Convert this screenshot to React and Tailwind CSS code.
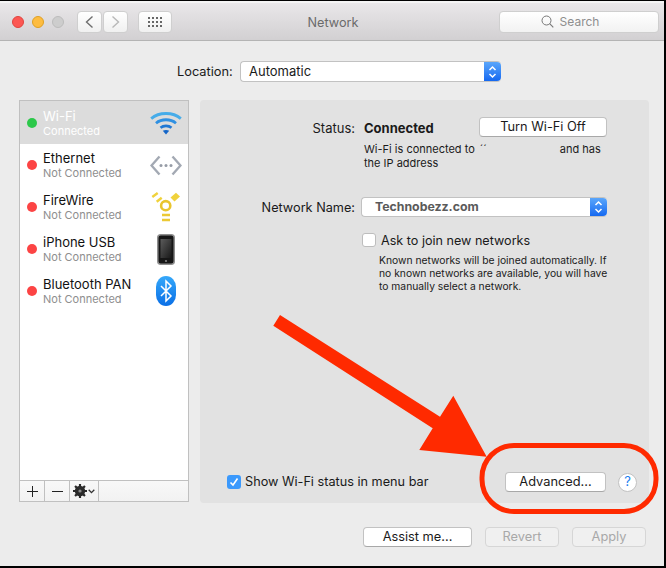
import React from 'react';

function WifiIcon() {
  return (
    <svg width="32" height="24" viewBox="0 0 32 24" fill="none">
      <path d="M1.2 7.6C9 0.8 23 0.8 30.8 7.6" stroke="#46ace9" strokeWidth="2.8" />
      <path d="M6 12.2C11.5 7.6 20.5 7.6 26 12.2" stroke="#2f90e2" strokeWidth="2.8" />
      <path d="M10.5 16.8C13.5 14.2 18.5 14.2 21.5 16.8" stroke="#1f78d4" strokeWidth="2.6" />
      <path d="M16 23.5L12.8 19.8C14.6 18.6 17.4 18.6 19.2 19.8Z" fill="#1466c8" />
    </svg>
  );
}

function EthernetIcon() {
  return (
    <svg width="32" height="21" viewBox="0 0 32 21" fill="none">
      <path d="M9.5 1.5L1.5 10.5L9.5 19.5" stroke="#a3a9b3" strokeWidth="2.4" />
      <path d="M22.5 1.5L30.5 10.5L22.5 19.5" stroke="#a3a9b3" strokeWidth="2.4" />
      <circle cx="11" cy="10.5" r="1.5" fill="#969ca6" />
      <circle cx="16" cy="10.5" r="1.5" fill="#969ca6" />
      <circle cx="21" cy="10.5" r="1.5" fill="#969ca6" />
    </svg>
  );
}

function FireWireIcon() {
  return (
    <svg width="30" height="30" viewBox="0 0 30 30" fill="none">
      <path d="M1.3 5L6.7 1M5.7 9.7L10.7 5.7" stroke="#f0d23c" strokeWidth="2.4" />
      <path d="M19.5 5.5L25 0.8L29 4.5L23.5 9.5Z" fill="#f0d23c" />
      <circle cx="14.7" cy="13.7" r="4.6" stroke="#e9c52e" strokeWidth="2.6" />
      <path d="M11 23H19M11 28H19" stroke="#ecc935" strokeWidth="2.4" />
    </svg>
  );
}

function PhoneIcon() {
  return (
    <svg width="18" height="31" viewBox="0 0 18 31">
      <defs>
        <linearGradient id="phoneScreen" x1="0" y1="0" x2="1" y2="1">
          <stop offset="0" stopColor="#5c5c5c" />
          <stop offset="1" stopColor="#181818" />
        </linearGradient>
      </defs>
      <rect x="0.75" y="0.75" width="16.5" height="29.5" rx="3" fill="#161616" stroke="#8f8f8f" strokeWidth="1.5" />
      <rect x="3.5" y="5" width="11" height="19" fill="url(#phoneScreen)" />
      <circle cx="9" cy="27" r="1.1" fill="#808080" />
    </svg>
  );
}

function BluetoothIcon() {
  return (
    <svg width="20" height="30" viewBox="0 0 20 30" fill="none">
      <defs>
        <linearGradient id="btBlue" x1="0" y1="0" x2="0" y2="1">
          <stop offset="0" stopColor="#35a8fa" />
          <stop offset="1" stopColor="#0a6fe6" />
        </linearGradient>
      </defs>
      <rect width="20" height="30" rx="10" ry="11" fill="url(#btBlue)" />
      <path d="M5 10L15 20L10 25V5L15 10L5 20" stroke="#fff" strokeWidth="1.5" />
    </svg>
  );
}

function Stepper() {
  return (
    <div className="w-[17px] shrink-0 flex items-center justify-center bg-gradient-to-b from-[#5aa6fb] to-[#1468f0] rounded-r-[4px]">
      <svg width="9" height="14" viewBox="0 0 9 14" fill="none">
        <path d="M1.5 5L4.5 2L7.5 5M1.5 9L4.5 12L7.5 9" stroke="#fff" strokeWidth="1.5" />
      </svg>
    </div>
  );
}

function Button({ width, disabled, children }) {
  return (
    <div
      className={`${width} h-[20px] flex items-center justify-center rounded-[4px] text-[12.8px] ${
        disabled
          ? 'bg-[#f0f0f0] text-[#a8a8a8] border border-[#d6d6d6]'
          : 'bg-white text-[#1a1a1a] border border-[#c2c2c2] border-b-[#a8a8a8]'
      }`}
    >
      {children}
    </div>
  );
}

function NetRow({ name, sub, selected, icon }) {
  return (
    <div className={`flex items-center pl-[7px] pr-[4px] ${selected ? 'h-[43px] bg-[#dcdcdc]' : 'h-[42px]'}`}>
      <div className={`w-[10px] h-[10px] rounded-full ${selected ? 'bg-[#2cc84a]' : 'bg-[#fc4444]'}`} />
      <div className="ml-[6px] pt-[2px] flex-1 flex flex-col">
        <span className={`text-[13px] leading-[15px] ${selected ? 'text-white' : 'text-[#111]'}`}>{name}</span>
        <span className={`text-[11px] leading-[15px] ${selected ? 'text-white' : 'text-[#8e8e8e]'}`}>{sub}</span>
      </div>
      <div className="w-[36px] flex items-center justify-center">{icon}</div>
    </div>
  );
}

export default function App() {
  return (
    <div className="relative w-[666px] h-[568px] flex flex-col overflow-hidden bg-[#ececec] border-t border-r-2 border-b-2 border-black font-['Inter',sans-serif] text-[#1a1a1a]">
      {/* title bar */}
      <div className="h-[40px] shrink-0 flex items-center pl-[12px] pr-[5px] border-t-2 border-t-[#f4f4f4] border-b border-b-[#b4b4b4] bg-gradient-to-b from-[#e9e7e9] to-[#d2d0d2]">
        <div className="flex gap-[8px]">
          <div className="w-[12px] h-[12px] rounded-full bg-[#fc5753] border border-[#e0443e]" />
          <div className="w-[12px] h-[12px] rounded-full bg-[#fdbc40] border border-[#dfa023]" />
          <div className="w-[12px] h-[12px] rounded-full bg-[#cdcdcd] border border-[#bcbcbc]" />
        </div>
        <div className="ml-[13px] flex gap-[1px]">
          <div className="w-[25px] h-[22px] flex items-center justify-center rounded-[4px] bg-gradient-to-b from-white to-[#f0f0f0] border border-[#cfcfcf]">
            <svg width="9" height="14" viewBox="0 0 9 14" fill="none">
              <path d="M7.5 1.5L1.5 7L7.5 12.5" stroke="#6e6e6e" strokeWidth="1.4" />
            </svg>
          </div>
          <div className="w-[25px] h-[22px] flex items-center justify-center rounded-[4px] bg-gradient-to-b from-white to-[#f0f0f0] border border-[#cfcfcf]">
            <svg width="9" height="14" viewBox="0 0 9 14" fill="none">
              <path d="M1.5 1.5L7.5 7L1.5 12.5" stroke="#b8b8b8" strokeWidth="1.4" />
            </svg>
          </div>
        </div>
        <div className="ml-[10px] w-[34px] h-[22px] flex items-center justify-center rounded-[4px] bg-gradient-to-b from-white to-[#f0f0f0] border border-[#cfcfcf]">
          <svg width="14" height="10" viewBox="0 0 14 10" fill="#666666">
            <rect x="0" y="0" width="2" height="2" /><rect x="4" y="0" width="2" height="2" /><rect x="8" y="0" width="2" height="2" /><rect x="12" y="0" width="2" height="2" />
            <rect x="0" y="4" width="2" height="2" /><rect x="4" y="4" width="2" height="2" /><rect x="8" y="4" width="2" height="2" /><rect x="12" y="4" width="2" height="2" />
            <rect x="0" y="8" width="2" height="2" /><rect x="4" y="8" width="2" height="2" /><rect x="8" y="8" width="2" height="2" /><rect x="12" y="8" width="2" height="2" />
          </svg>
        </div>
        <div className="flex-1 pr-[5px] pt-[3px] text-center text-[12.7px] text-[#6b6b6b]">Network</div>
        <div className="w-[160px] h-[22px] flex items-center justify-center gap-[6px] pr-[18px] rounded-[4px] bg-gradient-to-b from-white to-[#f2f2f2] border border-[#cfcfcf] text-[12px] text-[#8e8e8e]">
          <svg width="13" height="13" viewBox="0 0 13 13" fill="none">
            <circle cx="5.5" cy="5.5" r="4.5" stroke="#777777" />
            <path d="M8.7 8.7L12.3 12.3" stroke="#777777" strokeWidth="1.1" />
          </svg>
          <span>Search</span>
        </div>
      </div>

      {/* location */}
      <div className="mt-[20px] pl-[177px] flex items-center h-[21px] shrink-0">
        <span className="w-[63px] text-[12.8px]">Location:</span>
        <div className="w-[261px] h-[21px] flex rounded-[4px] bg-white border-t border-b border-l border-[#c2c2c2]">
          <span className="flex-1 pl-[8px] text-[13px] leading-[19px]">Automatic</span>
          <Stepper />
        </div>
      </div>

      {/* main */}
      <div className="mt-[18px] pl-[19px] flex items-start gap-[11px]">
        <div className="w-[170px] h-[402px] flex flex-col bg-white border border-[#c0c0c0]">
          <div className="flex-1">
            <NetRow name="Wi-Fi" sub="Connected" selected icon={<WifiIcon />} />
            <NetRow name="Ethernet" sub="Not Connected" icon={<EthernetIcon />} />
            <NetRow name="FireWire" sub="Not Connected" icon={<FireWireIcon />} />
            <NetRow name="iPhone USB" sub="Not Connected" icon={<PhoneIcon />} />
            <NetRow name="Bluetooth PAN" sub="Not Connected" icon={<BluetoothIcon />} />
          </div>
          <div className="h-[21px] flex border-t border-[#c0c0c0] bg-gradient-to-b from-[#f8f8f8] to-[#f2f2f2]">
            <div className="w-[25px] flex items-center justify-center border-r border-[#c0c0c0]">
              <svg width="11" height="11" viewBox="0 0 11 11" stroke="#222222"><path d="M5.5 0V11M0 5.5H11" /></svg>
            </div>
            <div className="w-[25px] flex items-center justify-center border-r border-[#c0c0c0]">
              <svg width="11" height="11" viewBox="0 0 11 11" stroke="#222222"><path d="M0 5.5H11" /></svg>
            </div>
            <div className="w-[29px] flex items-center justify-center gap-[1px] border-r border-[#c0c0c0]">
              <svg width="14" height="14" viewBox="0 0 13 13">
                <circle cx="6.5" cy="6.5" r="4.8" fill="#2a2a2a" />
                <path d="M6.5 0V2.5M6.5 10.5V13M0 6.5H2.5M10.5 6.5H13M1.9 1.9L3.6 3.6M9.4 9.4L11.1 11.1M11.1 1.9L9.4 3.6M3.6 9.4L1.9 11.1" stroke="#2a2a2a" strokeWidth="2" />
                <circle cx="6.5" cy="6.5" r="1.5" fill="#8a8a8a" />
              </svg>
              <svg width="7" height="5" viewBox="0 0 7 5" fill="none"><path d="M0.7 0.8L3.5 3.6L6.3 0.8" stroke="#333333" strokeWidth="1.3" /></svg>
            </div>
          </div>
        </div>

        <div className="w-[449px] h-[403px] flex flex-col pt-[17px] rounded-[4px] bg-[#e2e2e2]">
          <div className="flex items-center h-[20px]">
            <span className="w-[155px] text-right text-[13px] pt-[4px]">Status:</span>
            <span className="ml-[9px] w-[115px] font-bold text-[13px] pt-[4px]">Connected</span>
            <Button width="w-[128px]">Turn Wi-Fi Off</Button>
          </div>
          <div className="mt-[5px] pl-[164px] text-[11px] leading-[14px]">
            <div className="flex">
              <span>Wi-Fi is connected to</span>
              <span className="ml-[5px] w-[80px]">´´</span>
              <span>and has</span>
            </div>
            <div>the IP address</div>
          </div>
          <div className="mt-[27px] flex items-center h-[20px]">
            <span className="w-[155px] text-right text-[12.7px] pt-[1px]">Network Name:</span>
            <div className="ml-[6px] w-[246px] h-[20px] flex rounded-[4px] bg-white border-t border-b border-l border-[#c2c2c2]">
              <span className="flex-1 pl-[13px] text-[12.3px] leading-[18px] font-bold text-[#5a5a5a]">Technobezz.com</span>
              <Stepper />
            </div>
          </div>
          <div className="mt-[16px] pl-[162px] flex items-center h-[14px]">
            <div className="w-[14px] h-[14px] rounded-[3px] bg-white border border-[#bdbdbd]" />
            <span className="ml-[5px] pt-[2px] text-[12.6px]">Ask to join new networks</span>
          </div>
          <div className="mt-[7px] pl-[179px] text-[10.3px] leading-[13px]">
            <div>Known networks will be joined automatically. If</div>
            <div>no known networks are available, you will have</div>
            <div>to manually select a network.</div>
          </div>
          <div className="mt-auto mb-[11px] pl-[27px] pr-[12px] flex items-center h-[20px]">
            <div className="w-[14px] h-[14px] flex items-center justify-center rounded-[3px] bg-[#3b99fc]">
              <svg width="10" height="10" viewBox="0 0 10 10" fill="none"><path d="M1.5 5.5L4 8L8.5 1.5" stroke="#fff" strokeWidth="1.6" /></svg>
            </div>
            <span className="ml-[4px] flex-1 text-[12.7px]">Show Wi-Fi status in menu bar</span>
            <Button width="w-[101px]">Advanced...</Button>
            <div className="ml-[12px] w-[19px] h-[19px] flex items-center justify-center rounded-full bg-white border border-[#c2c2c2] text-[13px] text-[#1a7df0]">?</div>
          </div>
        </div>
      </div>

      {/* footer */}
      <div className="mt-[24px] pr-[18px] flex justify-end gap-[13px]">
        <Button width="w-[109px]">Assist me...</Button>
        <Button width="w-[74px]" disabled>Revert</Button>
        <Button width="w-[74px]" disabled>Apply</Button>
      </div>

      {/* red annotation drawn over the window */}
      <svg className="absolute left-0 top-[-1px] pointer-events-none" width="666" height="568" viewBox="0 0 666 568" fill="none">
        <path d="M280 315L273.3 325.7L432.7 428.3L419.3 450L486.7 456.7L453.3 395.7L440 416.7Z" fill="#ff2a00" />
        <rect x="482" y="445.5" width="174" height="66" rx="32" stroke="#ff2a00" strokeWidth="5" />
      </svg>
    </div>
  );
}
